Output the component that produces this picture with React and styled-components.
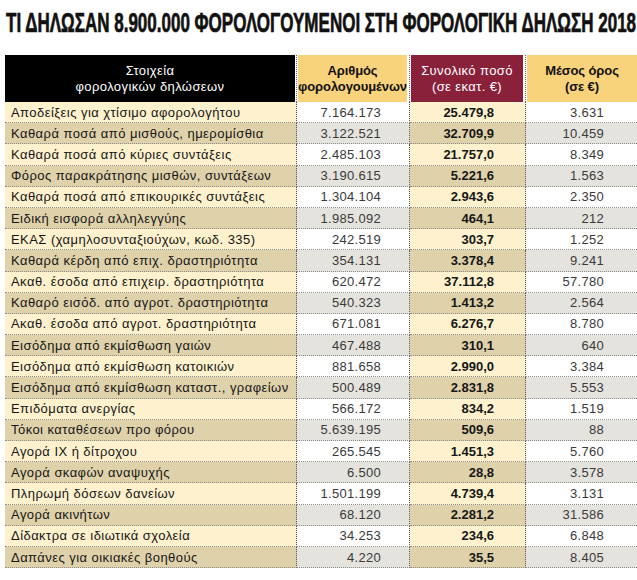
import React, { useLayoutEffect, useRef, useState } from 'react'
import styled, { createGlobalStyle } from 'styled-components'

const GlobalStyle = createGlobalStyle`
  html, body {
    margin: 0;
    padding: 0;
    background: #ffffff;
  }

  body {
    font-family: "Liberation Sans", Arial, sans-serif;
    color: #222;
  }
`

const rows = [
  ['Αποδείξεις για χτίσιμο αφορολογήτου', '7.164.173', '25.479,8', '3.631'],
  ['Καθαρά ποσά από μισθούς, ημερομίσθια', '3.122.521', '32.709,9', '10.459'],
  ['Καθαρά ποσά από κύριες συντάξεις', '2.485.103', '21.757,0', '8.349'],
  ['Φόρος παρακράτησης μισθών, συντάξεων', '3.190.615', '5.221,6', '1.563'],
  ['Καθαρά ποσά από επικουρικές συντάξεις', '1.304.104', '2.943,6', '2.350'],
  ['Ειδική εισφορά αλληλεγγύης', '1.985.092', '464,1', '212'],
  ['ΕΚΑΣ (χαμηλοσυνταξιούχων, κωδ. 335)', '242.519', '303,7', '1.252'],
  ['Καθαρά κέρδη από επιχ. δραστηριότητα', '354.131', '3.378,4', '9.241'],
  ['Ακαθ. έσοδα από επιχειρ. δραστηριότητα', '620.472', '37.112,8', '57.780'],
  ['Καθαρό εισόδ. από αγροτ. δραστηριότητα', '540.323', '1.413,2', '2.564'],
  ['Ακαθ. έσοδα από αγροτ. δραστηριότητα', '671.081', '6.276,7', '8.780'],
  ['Εισόδημα από εκμίσθωση γαιών', '467.488', '310,1', '640'],
  ['Εισόδημα από εκμίσθωση κατοικιών', '881.658', '2.990,0', '3.384'],
  ['Εισόδημα από εκμίσθωση καταστ., γραφείων', '500.489', '2.831,8', '5.553'],
  ['Επιδόματα ανεργίας', '566.172', '834,2', '1.519'],
  ['Τόκοι καταθέσεων προ φόρου', '5.639.195', '509,6', '88'],
  ['Αγορά ΙΧ ή δίτροχου', '265.545', '1.451,3', '5.760'],
  ['Αγορά σκαφών αναψυχής', '6.500', '28,8', '3.578'],
  ['Πληρωμή δόσεων δανείων', '1.501.199', '4.739,4', '3.131'],
  ['Αγορά ακινήτων', '68.120', '2.281,2', '31.586'],
  ['Δίδακτρα σε ιδιωτικά σχολεία', '34.253', '234,6', '6.848'],
  ['Δαπάνες για οικιακές βοηθούς', '4.220', '35,5', '8.405'],
]

const TITLE_WIDTH = 630

const Page = styled.main`
  padding: 10px 0 0 5px;
  width: 632px;
`

// the headline is a heavy condensed face in print; squeeze a bold sans to fit
const TitleBar = styled.div`
  height: 26px;
  margin: 0 0 19px 1px;
`

const Title = styled.h1`
  margin: 0;
  font-family: "Liberation Sans", Arial, sans-serif;
  font-weight: 700;
  font-size: 27px;
  line-height: 26px;
  color: #111;
  white-space: nowrap;
  display: inline-block;
  transform-origin: left center;
  -webkit-text-stroke: 0.7px #111;
`

const Table = styled.div`
  display: grid;
  grid-template-columns: 292px 113px 116px 111px;
  grid-auto-rows: 21.2px;
  grid-template-rows: 47px;
`

const HeadCell = styled.div`
  display: flex;
  border-right: ${p => (p.$last ? 'none' : '1px dotted #666')};
`

const HeadBox = styled.div`
  flex: 1;
  margin: ${p => p.$margin};
  background: ${p => p.$bg};
  color: ${p => p.$fg};
  font-weight: ${p => (p.$bold ? 700 : 400)};
  font-size: 13px;
  line-height: 16px;
  letter-spacing: ${p => (p.$bold ? '-0.1px' : '0.4px')};
  display: flex;
  flex-direction: column;
  align-items: center;
  justify-content: center;
  text-align: center;
  white-space: nowrap;
`

const palette = {
  label: ['#fef1cd', '#dfd1aa'],
  num: ['#ffffff', '#e5e3de'],
  total: ['#fef1cd', '#dfd1aa'],
}

const Cell = styled.div`
  box-sizing: border-box;
  display: flex;
  align-items: center;
  justify-content: ${p => (p.$kind === 'label' ? 'flex-start' : 'flex-end')};
  padding: ${p => p.$pad};
  background: ${p => palette[p.$kind][p.$odd ? 1 : 0]};
  border-bottom: 1px dotted #8c8c8c;
  border-right: ${p => (p.$last ? 'none' : '1px dotted #555')};
  font-size: 13px;
  letter-spacing: ${p => (p.$kind === 'label' ? '0.45px' : p.$kind === 'num' ? '0.3px' : '0')};
  font-weight: ${p => (p.$kind === 'total' ? 700 : 400)};
  color: ${p => (p.$kind === 'num' ? '#3a3a3a' : '#161616')};
  white-space: nowrap;
  overflow: hidden;
`

const heads = [
  { lines: ['Στοιχεία', 'φορολογικών δηλώσεων'], bg: '#000000', fg: '#ffffff', margin: '0 1px 0 0' },
  { lines: ['Αριθμός', 'φορολογουμένων'], bg: '#f9d37b', fg: '#111111', bold: true, margin: '0 2px 0 1px' },
  { lines: ['Συνολικό ποσό', '(σε εκατ. €)'], bg: '#8a213b', fg: '#ffffff', margin: '0 2px 0 1px' },
  { lines: ['Μέσος όρος', '(σε €)'], bg: '#f9d37b', fg: '#111111', bold: true, margin: '0 0 0 1px' },
]

const kinds = [
  { kind: 'label', pad: '0 0 0 6px' },
  { kind: 'num', pad: '0 28px 0 0' },
  { kind: 'total', pad: '0 31px 0 0' },
  { kind: 'num', pad: '0 33px 0 0' },
]

function FitTitle({ children }) {
  const ref = useRef(null)
  const [natural, setNatural] = useState(0)

  useLayoutEffect(() => {
    const measure = () => {
      if (ref.current) setNatural(ref.current.scrollWidth)
    }
    measure()
    if (document.fonts && document.fonts.ready) document.fonts.ready.then(measure)
  }, [])

  const scale = natural ? TITLE_WIDTH / natural : 0.63
  const style = natural
    ? { transform: `scaleX(${scale})`, marginRight: `${TITLE_WIDTH - natural}px` }
    : { transform: `scaleX(${scale})` }

  return (
    <Title ref={ref} style={style}>
      {children}
    </Title>
  )
}

export default function App() {
  return (
    <>
      <GlobalStyle />
      <Page>
        <TitleBar>
          <FitTitle>ΤΙ ΔΗΛΩΣΑΝ 8.900.000 ΦΟΡΟΛΟΓΟΥΜΕΝΟΙ ΣΤΗ ΦΟΡΟΛΟΓΙΚΗ ΔΗΛΩΣΗ 2018</FitTitle>
        </TitleBar>
        <Table>
          {heads.map((h, i) => (
            <HeadCell key={i} $last={i === 3}>
              <HeadBox $bg={h.bg} $fg={h.fg} $bold={h.bold} $margin={h.margin}>
                <span>{h.lines[0]}</span>
                <span>{h.lines[1]}</span>
              </HeadBox>
            </HeadCell>
          ))}
          {rows.map((row, r) =>
            row.map((value, c) => (
              <Cell
                key={`${r}-${c}`}
                $kind={kinds[c].kind}
                $pad={kinds[c].pad}
                $odd={r % 2 === 1}
                $last={c === 3}
              >
                {value}
              </Cell>
            ))
          )}
        </Table>
      </Page>
    </>
  )
}
